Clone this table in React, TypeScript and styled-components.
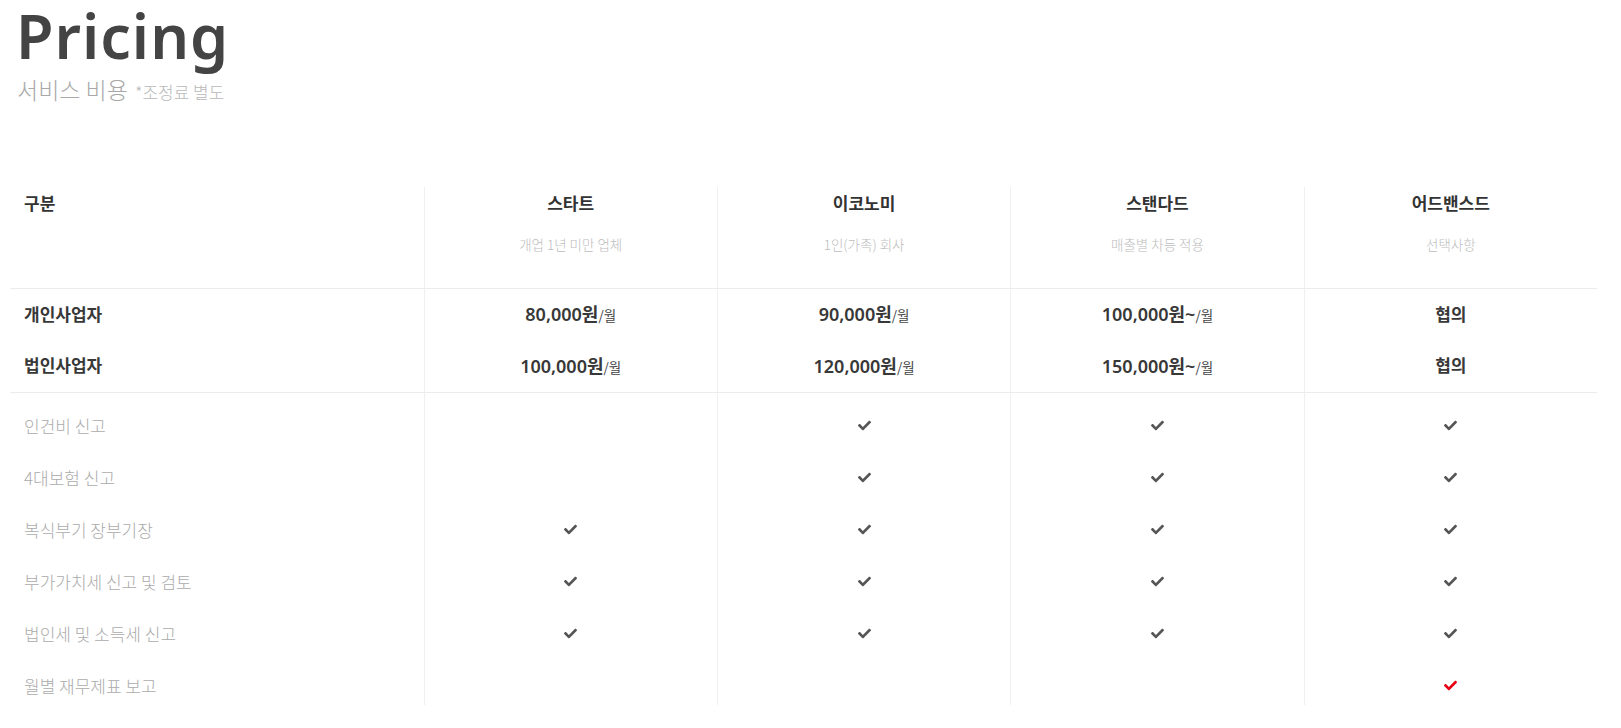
import React from "react";
import styled, { createGlobalStyle } from "styled-components";
import { FaCheck } from "react-icons/fa";

const GlobalStyle = createGlobalStyle`
  *, *::before, *::after {
    box-sizing: border-box;
  }
  body {
    margin: 0;
    background: #fff;
    font-family: "Noto Sans", "Noto Sans CJK KR", sans-serif;
    color: #333;
  }
`;

const Page = styled.div`
  padding: 0 24px 20px 10px;
`;

const Head = styled.header`
  padding: 0 0 0 6px;
`;

const Title = styled.h1`
  margin: 0;
  font-family: "Noto Sans", sans-serif;
  font-size: 61px;
  font-weight: 600;
  line-height: 72px;
  letter-spacing: 1px;
  color: #444;
`;

const Sub = styled.p`
  margin: 1px 0 0 1px;
  font-family: "Noto Sans CJK KR", sans-serif;
  font-size: 23px;
  font-weight: 300;
  line-height: 32px;
  color: #a8a8a8;
  span {
    font-size: 17px;
    color: #b8b8b8;
    margin-left: 7px;
  }
`;

const Table = styled.div`
  margin-top: 79px;
`;

const Row = styled.div<{ $line?: boolean; $tall?: boolean }>`
  display: grid;
  grid-template-columns: 413fr 293fr 293fr 293fr 293fr;
  height: ${(p) => (p.$tall ? "102px" : "52px")};
  border-bottom: ${(p) => (p.$line ? "1px solid #ececec" : "none")};
`;

const Cell = styled.div<{ $first?: boolean }>`
  display: flex;
  flex-direction: column;
  justify-content: center;
  align-items: ${(p) => (p.$first ? "flex-start" : "center")};
  padding-left: ${(p) => (p.$first ? "14px" : "0")};
  border-left: ${(p) => (p.$first ? "none" : "1px solid #f0f0f0")};
`;

const HeadCell = styled(Cell)`
  justify-content: flex-start;
  padding-top: 4px;
`;

const PriceCell = styled(Cell)`
  padding-bottom: 4px;
`;

const FeatureCell = styled(Cell)`
  padding-top: 12px;
`;

const ColName = styled.div`
  font-family: "Noto Sans CJK KR", sans-serif;
  font-size: 17px;
  font-weight: 700;
  line-height: 24px;
  color: #333;
`;

const ColNote = styled.div`
  margin-top: 19px;
  font-family: "Noto Sans CJK KR", sans-serif;
  font-size: 13.5px;
  font-weight: 300;
  line-height: 20px;
  color: #bdbdbd;
`;

const Label = styled.div<{ $muted?: boolean }>`
  font-family: "Noto Sans CJK KR", sans-serif;
  font-size: 17px;
  font-weight: ${(p) => (p.$muted ? 300 : 700)};
  color: ${(p) => (p.$muted ? "#ababab" : "#383838")};
`;

const Price = styled.div`
  font-family: "Noto Sans", "Noto Sans CJK KR", sans-serif;
  font-size: 18px;
  font-weight: 600;
  color: #383838;
  small {
    font-family: "Noto Sans CJK KR", sans-serif;
    font-size: 13.5px;
    font-weight: 400;
    color: #444;
  }
`;

const Deal = styled.div`
  font-family: "Noto Sans CJK KR", sans-serif;
  font-size: 17px;
  font-weight: 700;
  color: #383838;
`;

const Check = styled(FaCheck)<{ $red?: boolean }>`
  width: 13px;
  height: 13px;
  color: ${(p) => (p.$red ? "#e50012" : "#555")};
`;

const plans = [
  { name: "스타트", note: "개업 1년 미만 업체" },
  { name: "이코노미", note: "1인(가족) 회사" },
  { name: "스탠다드", note: "매출별 차등 적용" },
  { name: "어드밴스드", note: "선택사항" },
];

const prices = [
  { label: "개인사업자", values: ["80,000원|/월", "90,000원|/월", "100,000원~|/월", "협의"] },
  { label: "법인사업자", values: ["100,000원|/월", "120,000원|/월", "150,000원~|/월", "협의"] },
];

// 0 = none, 1 = check, 2 = red check
const features: { label: string; marks: number[] }[] = [
  { label: "인건비 신고", marks: [0, 1, 1, 1] },
  { label: "4대보험 신고", marks: [0, 1, 1, 1] },
  { label: "복식부기 장부기장", marks: [1, 1, 1, 1] },
  { label: "부가가치세 신고 및 검토", marks: [1, 1, 1, 1] },
  { label: "법인세 및 소득세 신고", marks: [1, 1, 1, 1] },
  { label: "월별 재무제표 보고", marks: [0, 0, 0, 2] },
];

export default function App() {
  return (
    <Page>
      <GlobalStyle />
      <Head>
        <Title>Pricing</Title>
        <Sub>
          서비스 비용<span>*조정료 별도</span>
        </Sub>
      </Head>
      <Table>
        <Row $tall $line>
          <HeadCell $first>
            <ColName>구분</ColName>
          </HeadCell>
          {plans.map((p) => (
            <HeadCell key={p.name}>
              <ColName>{p.name}</ColName>
              <ColNote>{p.note}</ColNote>
            </HeadCell>
          ))}
        </Row>
        {prices.map((r, i) => (
          <Row key={r.label} $line={i === prices.length - 1}>
            <PriceCell $first>
              <Label>{r.label}</Label>
            </PriceCell>
            {r.values.map((v, j) => {
              const [amount, unit] = v.split("|");
              return (
                <PriceCell key={j}>
                  {unit ? (
                    <Price>
                      {amount}
                      <small>{unit}</small>
                    </Price>
                  ) : (
                    <Deal>{amount}</Deal>
                  )}
                </PriceCell>
              );
            })}
          </Row>
        ))}
        {features.map((f) => (
          <Row key={f.label}>
            <FeatureCell $first>
              <Label $muted>{f.label}</Label>
            </FeatureCell>
            {f.marks.map((m, j) => (
              <FeatureCell key={j}>{m > 0 && <Check $red={m === 2} />}</FeatureCell>
            ))}
          </Row>
        ))}
      </Table>
    </Page>
  );
}
